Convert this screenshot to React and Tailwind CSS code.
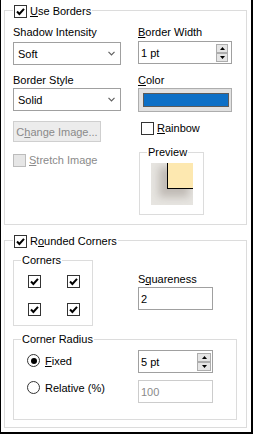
import React from 'react'

// Small Windows-style form controls
function Check({ checked = false, disabled = false }) {
  return (
    <span
      className={`flex h-[13px] w-[13px] shrink-0 items-center justify-center border ${
        disabled ? 'border-[#bcbcbc] bg-[#e6e6e6]' : 'border-[#333333] bg-white'
      }`}
    >
      {checked && (
        <svg width="11" height="11" viewBox="0 0 11 11">
          <path d="M2 5.5 L4.4 8 L9 2.8" fill="none" stroke="#000" strokeWidth="2" />
        </svg>
      )}
    </span>
  )
}

function Radio({ checked = false }) {
  return (
    <span className="flex h-[13px] w-[13px] shrink-0 items-center justify-center rounded-full border border-[#333333] bg-white">
      {checked && <span className="h-[6px] w-[6px] rounded-full bg-black" />}
    </span>
  )
}

function Select({ value }) {
  return (
    <div className="flex h-[23px] w-[108px] items-center justify-between border border-[#a0a0a0] bg-white pl-[4px] pr-[5px]">
      <span>{value}</span>
      <svg width="7" height="5" viewBox="0 0 7 5">
        <path d="M0.5 0.8 L3.5 3.8 L6.5 0.8" fill="none" stroke="#606060" strokeWidth="1.2" />
      </svg>
    </div>
  )
}

function SpinBtn({ up, w }) {
  return (
    <span className={`flex h-[9px] ${w} items-center justify-center border border-[#adadad] bg-[#e5e5e5]`}>
      <svg width="5" height="3" viewBox="0 0 5 3">
        <path d={up ? 'M0 3 L2.5 0 L5 3 Z' : 'M0 0 L2.5 3 L5 0 Z'} fill="#000" />
      </svg>
    </span>
  )
}

function Spin({ value, width, btnW, mr }) {
  return (
    <div className={`flex h-[23px] ${width} items-center justify-between border border-[#a0a0a0] bg-white pl-[2px] ${mr}`}>
      <span>{value}</span>
      <span className="flex flex-col">
        <SpinBtn up w={btnW} />
        <SpinBtn w={btnW} />
      </span>
    </div>
  )
}

function Group({ legend, legendLeft, legendTop, className, children }) {
  return (
    <div className={`relative border border-[#dcdcdc] ${className}`}>
      <div className={`absolute flex items-center gap-[3px] bg-white px-[1px] ${legendLeft} ${legendTop}`}>
        {legend}
      </div>
      {children}
    </div>
  )
}

export default function App() {
  return (
    <div className="h-[434px] w-[253px] overflow-hidden border-b-2 border-l border-r-2 border-black bg-white font-['Liberation_Sans',Arial,sans-serif] text-[11px] leading-[14px] text-black">
      {/* Use Borders */}
      <Group
        className="ml-[3px] mt-[10px] h-[215px] w-[243px]"
        legendLeft="left-[8px]"
        legendTop="-top-[7px]"
        legend={
          <>
            <Check checked />
            <span>
              <u>U</u>se Borders
            </span>
          </>
        }
      >
        <div className="flex pl-[8px] pt-[14px]">
          <div className="flex w-[108px] flex-col items-start">
            <span>Shadow Intensity</span>
            <div className="mt-[3px]">
              <Select value="Soft" />
            </div>
            <span className="mt-[8px]">Border Style</span>
            <div className="mt-[1px]">
              <Select value="Solid" />
            </div>
            <div className="mt-[10px] flex h-[21px] w-[88px] items-center justify-center border border-[#cfcfcf] bg-[#ececec] text-[#8a8a8a]">
              <span>
                C<u>h</u>ange Image...
              </span>
            </div>
            <div className="mt-[11px] flex items-center gap-[3px] text-[#8a8a8a]">
              <Check disabled />
              <span>
                <u>S</u>tretch Image
              </span>
            </div>
          </div>

          <div className="ml-[17px] flex w-[95px] flex-col items-start">
            <span>
              <u>B</u>order Width
            </span>
            <div className="mt-[2px]">
              <Spin value="1 pt" width="w-[94px]" btnW="w-[12px]" mr="pr-[3px]" />
            </div>
            <span className="mt-[9px]">
              <u>C</u>olor
            </span>
            <div className="mt-[1px] h-[24px] w-[94px] border border-[#adadad] bg-[#e1e1e1] pb-[4px] pl-[4px] pr-[2px] pt-[4px]">
              <div className="h-full w-full border border-[#5a5a5a] bg-[#0c6fc6]" />
            </div>
            <div className="ml-[3px] mt-[9px] flex items-center gap-[3px]">
              <Check />
              <span>
                <u>R</u>ainbow
              </span>
            </div>
            <Group
              className="ml-[1px] mt-[17px] h-[63px] w-[65px]"
              legendLeft="left-[7px]"
              legendTop="-top-[8px]"
              legend={<span>Preview</span>}
            >
              <div className="ml-[11px] mt-[10px] flex h-[42px] w-[42px] justify-end overflow-hidden bg-[#e7e5e1]">
                <div className="h-[26px] w-[26px] border-b border-l border-black bg-[#fde8b0] shadow-[-6px_6px_8px_2px_rgba(120,110,100,0.35)]" />
              </div>
            </Group>
          </div>
        </div>
      </Group>

      {/* Rounded Corners */}
      <Group
        className="ml-[3px] mt-[15px] h-[188px] w-[243px]"
        legendLeft="left-[8px]"
        legendTop="-top-[7px]"
        legend={
          <>
            <Check checked />
            <span>
              R<u>o</u>unded Corners
            </span>
          </>
        }
      >
        <div className="flex pl-[8px]">
          <Group
            className="mt-[19px] h-[66px] w-[80px]"
            legendLeft="left-[7px]"
            legendTop="-top-[8px]"
            legend={<span>Corners</span>}
          >
            <div className="ml-[14px] mt-[14px] grid w-max grid-cols-2 gap-x-[26px] gap-y-[15px]">
              <Check checked />
              <Check checked />
              <Check checked />
              <Check checked />
            </div>
          </Group>
          <div className="ml-[45px] flex flex-col items-start pt-[31px]">
            <span>
              S<u>q</u>uareness
            </span>
            <div className="mt-[1px] flex h-[23px] w-[75px] items-center border border-[#a0a0a0] bg-white pl-[2px]">
              2
            </div>
          </div>
        </div>

        <Group
          className="ml-[8px] mt-[13px] h-[81px] w-[224px]"
          legendLeft="left-[7px]"
          legendTop="-top-[8px]"
          legend={<span>Corner Radius</span>}
        >
          <div className="flex">
            <div className="ml-[13px] flex w-[111px] flex-col pt-[14px]">
              <div className="flex h-[13px] items-center gap-[5px]">
                <Radio checked />
                <span>
                  <u>F</u>ixed
                </span>
              </div>
              <div className="mt-[14px] flex h-[13px] items-center gap-[5px]">
                <Radio />
                <span>Relative (%)</span>
              </div>
            </div>
            <div className="flex flex-col pt-[10px]">
              <Spin value="5 pt" width="w-[75px]" btnW="w-[14px]" mr="pr-[1px]" />
              <div className="mt-[7px] flex h-[23px] w-[75px] items-center border border-[#cccccc] bg-white pl-[2px] text-[#8a8a8a]">
                100
              </div>
            </div>
          </div>
        </Group>
      </Group>
    </div>
  )
}
